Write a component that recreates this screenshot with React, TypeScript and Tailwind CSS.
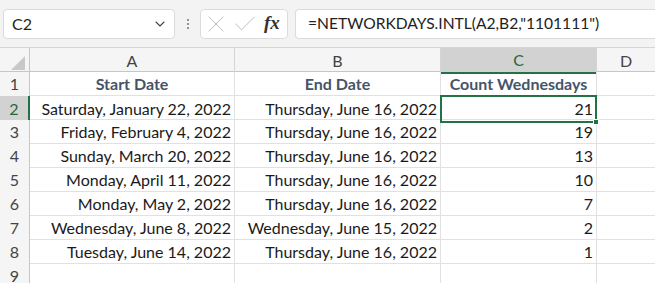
import React from 'react';
import { ChevronDown, X, Check } from 'lucide-react';

const rows = [
  { a: 'Saturday, January 22, 2022', b: 'Thursday, June 16, 2022', c: 21 },
  { a: 'Friday, February 4, 2022', b: 'Thursday, June 16, 2022', c: 19 },
  { a: 'Sunday, March 20, 2022', b: 'Thursday, June 16, 2022', c: 13 },
  { a: 'Monday, April 11, 2022', b: 'Thursday, June 16, 2022', c: 10 },
  { a: 'Monday, May 2, 2022', b: 'Thursday, June 16, 2022', c: 7 },
  { a: 'Wednesday, June 8, 2022', b: 'Wednesday, June 15, 2022', c: 2 },
  { a: 'Tuesday, June 14, 2022', b: 'Thursday, June 16, 2022', c: 1 },
];

const cols = 'grid grid-cols-[30px_205px_206px_156px_1fr]';

const App: React.FC = () => {
  return (
    <div className="w-[655px] h-[283px] overflow-hidden bg-white font-['Lato',sans-serif] text-[16px] text-[#1a1a1a]">
      {/* Formula bar */}
      <div className="h-[48px] bg-[#f3f3f3] flex items-center pl-[3px] border-b border-[#d6d6d6]">
        <div className="w-[172px] h-[30px] bg-white border border-[#dcdcdc] rounded-[4px] flex items-center justify-between pl-[8px] pr-[6px]">
          <span className="text-[16px] text-[#222]">C2</span>
          <ChevronDown className="w-[16px] h-[16px] text-[#444]" strokeWidth={1.6} />
        </div>
        <div className="w-[25px] flex flex-col items-center gap-[2px]">
          <span className="w-[2px] h-[2px] bg-[#777] rounded-full" />
          <span className="w-[2px] h-[2px] bg-[#777] rounded-full" />
          <span className="w-[2px] h-[2px] bg-[#777] rounded-full" />
        </div>
        <div className="w-[88px] h-[30px] bg-white border border-[#dcdcdc] rounded-[4px] flex items-center pl-[1px] gap-[1px]">
          <X className="w-[28px] h-[28px] text-[#b8b8b8]" strokeWidth={0.8} />
          <Check className="w-[28px] h-[28px] text-[#b8b8b8]" strokeWidth={0.8} />
          <span className="font-['Liberation_Serif',serif] italic font-bold text-[19px] text-[#333] ml-[4px]">fx</span>
        </div>
        <div className="flex-1 ml-[7px] h-[30px] bg-white border border-[#dcdcdc] border-r-0 rounded-l-[4px] flex items-center pl-[12px]">
          <span className="text-[15.6px] text-[#222]">=NETWORKDAYS.INTL(A2,B2,"1101111")</span>
        </div>
      </div>

      {/* Column headers */}
      <div className={`${cols} h-[24px] bg-[#f5f5f5] border-b border-[#c6c6c6] text-[#444]`}>
        <div className="relative border-r border-[#c6c6c6]">
          <div className="absolute right-[4px] bottom-[3px] w-0 h-0 border-l-[14px] border-l-transparent border-b-[14px] border-b-[#c8c8c8]" />
        </div>
        <div className="flex items-center justify-center border-r border-[#d4d4d4]">A</div>
        <div className="flex items-center justify-center border-r border-[#d4d4d4]">B</div>
        <div className="flex items-center justify-center bg-[#d2d2d2] text-[#1e6b3c] border-b-2 border-[#217346] -mb-px border-r border-r-[#d4d4d4]">C</div>
        <div className="flex items-center justify-center">D</div>
      </div>

      {/* Row 1: headings */}
      <div className={`${cols} h-[24px] border-b border-[#e1e1e1]`}>
        <div className="flex items-center justify-center bg-[#f5f5f5] border-r border-[#c6c6c6] text-[#444]">1</div>
        <div className="flex items-center justify-center border-r border-[#e1e1e1] font-bold text-[#44546a]">Start Date</div>
        <div className="flex items-center justify-center border-r border-[#e1e1e1] font-bold text-[#44546a]">End Date</div>
        <div className="flex items-center justify-center border-r border-[#e1e1e1] font-bold text-[#44546a]">Count Wednesdays</div>
        <div />
      </div>

      {rows.map((r, i) => {
        const selected = i === 0;
        return (
          <div key={i} className={`${cols} h-[24px] border-b border-[#e1e1e1]`}>
            <div
              className={
                selected
                  ? 'flex items-center justify-center bg-[#d2d2d2] border-r-2 border-[#217346] text-[#1e6b3c]'
                  : 'flex items-center justify-center bg-[#f5f5f5] border-r border-[#c6c6c6] text-[#444]'
              }
            >
              {i + 2}
            </div>
            <div className="flex items-center justify-end pr-[3px] border-r border-[#e1e1e1]">{r.a}</div>
            <div className="flex items-center justify-end pr-[3px] border-r border-[#e1e1e1]">{r.b}</div>
            {selected ? (
              <div className="relative flex items-center justify-end pr-[2px] border-2 border-[#217346] -my-px -ml-px">
                {r.c}
                <div className="absolute -right-[4px] -bottom-[4px] w-[6px] h-[6px] bg-[#217346] border border-white" />
              </div>
            ) : (
              <div className="flex items-center justify-end pr-[3px] border-r border-[#e1e1e1]">{r.c}</div>
            )}
            <div />
          </div>
        );
      })}

      <div className={`${cols} h-[24px]`}>
        <div className="flex items-center justify-center bg-[#f5f5f5] border-r border-[#c6c6c6] text-[#444]">9</div>
        <div className="border-r border-[#e1e1e1]" />
        <div className="border-r border-[#e1e1e1]" />
        <div className="border-r border-[#e1e1e1]" />
        <div />
      </div>
    </div>
  );
};

export default App;
